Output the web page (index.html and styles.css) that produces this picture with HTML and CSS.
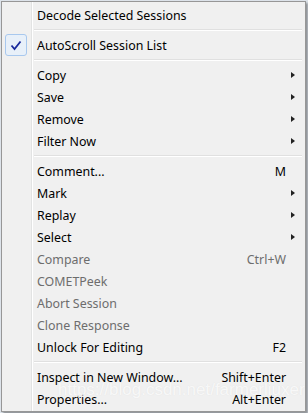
FILE: index.html
```html
<!DOCTYPE html>
<html lang="en">
<head>
    <meta charset="UTF-8">
    <meta name="viewport" content="width=device-width, initial-scale=1.0">
    <title>Session Context Menu</title>
    <link rel="stylesheet" href="styles.css">
</head>
<body>
    <div class="context-menu">
        <div class="menu-item">
            <span class="label">Decode Selected Sessions</span>
        </div>
        <div class="menu-separator"></div>

        <div class="menu-item checked">
            <span class="check-box">
                <svg width="12" height="11" viewBox="0 0 12 11">
                    <path d="M1.5 5.5 L4.5 9 L10.5 1.5" fill="none" stroke="#1a2a9c" stroke-width="1.8"/>
                </svg>
            </span>
            <span class="label">AutoScroll Session List</span>
        </div>
        <div class="menu-separator"></div>

        <div class="menu-item has-sub">
            <span class="label">Copy</span>
            <span class="arrow"></span>
        </div>
        <div class="menu-item has-sub">
            <span class="label">Save</span>
            <span class="arrow"></span>
        </div>
        <div class="menu-item has-sub">
            <span class="label">Remove</span>
            <span class="arrow"></span>
        </div>
        <div class="menu-item has-sub">
            <span class="label">Filter Now</span>
            <span class="arrow"></span>
        </div>
        <div class="menu-separator"></div>

        <div class="menu-item">
            <span class="label">Comment...</span>
            <span class="shortcut">M</span>
        </div>
        <div class="menu-item has-sub">
            <span class="label">Mark</span>
            <span class="arrow"></span>
        </div>
        <div class="menu-item has-sub">
            <span class="label">Replay</span>
            <span class="arrow"></span>
        </div>
        <div class="menu-item has-sub">
            <span class="label">Select</span>
            <span class="arrow"></span>
        </div>
        <div class="menu-item disabled">
            <span class="label">Compare</span>
            <span class="shortcut">Ctrl+W</span>
        </div>
        <div class="menu-item disabled">
            <span class="label">COMETPeek</span>
        </div>
        <div class="menu-item disabled">
            <span class="label">Abort Session</span>
        </div>
        <div class="menu-item disabled">
            <span class="label">Clone Response</span>
        </div>
        <div class="menu-item">
            <span class="label">Unlock For Editing</span>
            <span class="shortcut">F2</span>
        </div>
        <div class="menu-separator"></div>

        <div class="menu-item">
            <span class="label">Inspect in New Window...</span>
            <span class="shortcut">Shift+Enter</span>
        </div>
        <div class="menu-item">
            <span class="label">Properties...</span>
            <span class="shortcut">Alt+Enter</span>
        </div>

        <div class="watermark">https://blog.csdn.net/farmerliuxer</div>
    </div>
</body>
</html>
```

FILE: styles.css
```css
* {
    margin: 0;
    padding: 0;
    box-sizing: border-box;
}

body {
    width: 308px;
    height: 413px;
    overflow: hidden;
    background: #dde3ea;
    font-family: 'Noto Sans', 'Segoe UI', Tahoma, sans-serif;
    font-size: 12.4px;
    color: #000;
}

.context-menu {
    position: relative;
    width: 305px;
    margin: 1px 0 0 1px;
    padding: 2px 2px 1px 2px;
    background-color: #f0f0f0;
    background-image: linear-gradient(to right,
        transparent 29px, #e2e3e3 29px, #e2e3e3 30px,
        #ffffff 30px, #ffffff 31px, transparent 31px);
    border: 1px solid #979797;
    box-shadow: 2px 2px 2px rgba(0, 0, 0, 0.35);
    display: flex;
    flex-direction: column;
}

.menu-item {
    height: 22px;
    display: flex;
    align-items: center;
    padding-left: 33px;
    position: relative;
    white-space: nowrap;
}

.menu-item .label {
    flex: 1;
}

.menu-item .shortcut {
    padding-right: 17px;
}

.menu-item.disabled {
    color: #6d6d6d;
}

.arrow {
    width: 17px;
    height: 22px;
    display: flex;
    align-items: center;
    padding-left: 5px;
}

.arrow::before {
    content: '';
    border-left: 4px solid #222;
    border-top: 3.5px solid transparent;
    border-bottom: 3.5px solid transparent;
}

.check-box {
    position: absolute;
    left: 1px;
    top: 0;
    width: 22px;
    height: 22px;
    border: 1px solid #a8c8ee;
    border-radius: 3px;
    background: #e8f0f9;
    display: flex;
    align-items: center;
    justify-content: center;
}

.menu-separator {
    height: 8px;
    margin-left: 30px;
    margin-right: 1px;
    position: relative;
}

.menu-separator::before {
    content: '';
    position: absolute;
    left: 0;
    right: 0;
    top: 3px;
    height: 1px;
    background: #e0e0e0;
    border-bottom: 1px solid #ffffff;
    box-sizing: content-box;
}

.watermark {
    position: absolute;
    left: 56px;
    top: 378px;
    font-family: 'Liberation Sans', Arial, sans-serif;
    font-size: 17px;
    color: rgba(255, 255, 255, 0.75);
    text-shadow: 0 0 1px rgba(200, 200, 200, 0.4);
    white-space: nowrap;
}
```
